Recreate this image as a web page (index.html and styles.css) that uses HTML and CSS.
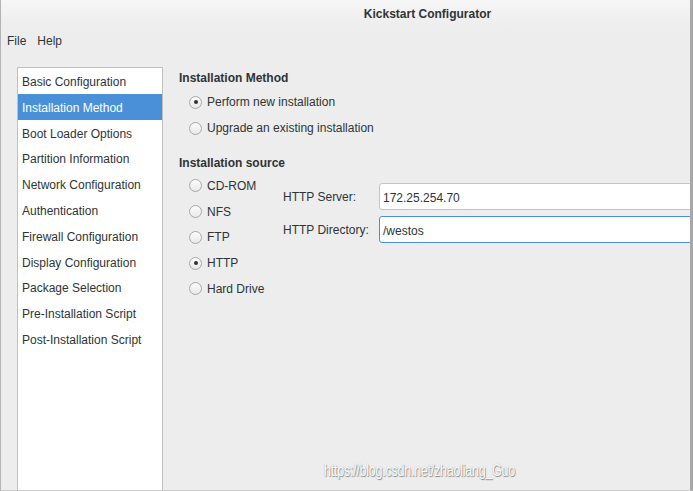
FILE: index.html
```html
<!DOCTYPE html>
<html>
<head>
<meta charset="utf-8">
<link rel="stylesheet" href="styles.css">
</head>
<body>
<div class="window">
  <div class="titlebar"><span class="title">Kickstart Configurator</span></div>
  <div class="menubar"><span class="menu">File</span><span class="menu">Help</span></div>
  <div class="main">
    <ul class="sidebar">
      <li class="item">Basic Configuration</li>
      <li class="item selected">Installation Method</li>
      <li class="item">Boot Loader Options</li>
      <li class="item">Partition Information</li>
      <li class="item">Network Configuration</li>
      <li class="item">Authentication</li>
      <li class="item">Firewall Configuration</li>
      <li class="item">Display Configuration</li>
      <li class="item">Package Selection</li>
      <li class="item">Pre-Installation Script</li>
      <li class="item">Post-Installation Script</li>
    </ul>
    <div class="panel">
      <div class="heading">Installation Method</div>
      <div class="radios method">
        <div class="radio-row"><span class="radio checked"></span><span>Perform new installation</span></div>
        <div class="radio-row"><span class="radio"></span><span>Upgrade an existing installation</span></div>
      </div>
      <div class="heading second">Installation source</div>
      <div class="source">
        <div class="radios">
          <div class="radio-row src"><span class="radio"></span><span>CD-ROM</span></div>
          <div class="radio-row src"><span class="radio"></span><span>NFS</span></div>
          <div class="radio-row src"><span class="radio"></span><span>FTP</span></div>
          <div class="radio-row src"><span class="radio checked"></span><span>HTTP</span></div>
          <div class="radio-row src"><span class="radio"></span><span>Hard Drive</span></div>
        </div>
        <div class="fields">
          <div class="field"><span class="label">HTTP Server:</span><div class="entry">172.25.254.70</div></div>
          <div class="field"><span class="label">HTTP Directory:</span><div class="entry focused">/westos</div></div>
        </div>
      </div>
    </div>
  </div>
  <div class="watermark">https://blog.csdn.net/zhaoliang_Guo</div>
</div>
</body>
</html>
```
FILE: styles.css
```css
html, body {
  margin: 0;
  padding: 0;
  background: #ededed;
  overflow: hidden;
}
.window {
  position: relative;
  width: 693px;
  height: 491px;
  box-sizing: border-box;
  border-left: 1px solid #b3b3b3;
  border-right: 3px solid #a8a8a8;
  border-bottom: 1px solid #cdcdcd;
  background: #ededed;
  font-family: "Liberation Sans", Arial, sans-serif;
  font-size: 12px;
  color: #2e3436;
  overflow: hidden;
  display: flex;
  flex-direction: column;
}
.titlebar {
  height: 27px;
  flex: none;
  display: flex;
  align-items: center;
  justify-content: center;
  padding-left: 164px;
  background: linear-gradient(#f6f6f6, #ededed);
}
.title {
  font-weight: bold;
  font-size: 12px;
  color: #2e3436;
}
.menubar {
  height: 27px;
  flex: none;
  display: flex;
  align-items: center;
  padding-left: 6px;
  gap: 11px;
}
.main {
  flex: 1;
  display: flex;
  align-items: stretch;
  padding: 13px 0 0 16px;
  min-height: 0;
}
.sidebar {
  list-style: none;
  margin: 0;
  padding: 0;
  width: 146px;
  box-sizing: border-box;
  background: #fff;
  border: 1px solid #c0c0c0;
  border-bottom: none;
  flex: none;
}
.item {
  height: 25.8px;
  box-sizing: border-box;
  padding-top: 3px;
  line-height: 22.8px;
  padding-left: 4px;
  white-space: nowrap;
}
.item.selected {
  background: #4a90d9;
  color: #fff;
}
.panel {
  flex: 1;
  padding-left: 16px;
  padding-top: 1px;
  min-width: 0;
}
.heading {
  font-weight: bold;
  height: 20px;
  line-height: 20px;
}
.heading.second {
  margin-top: 12px;
}
.radios {
  display: flex;
  flex-direction: column;
  padding-left: 10px;
}
.radios.method {
  margin-top: 1px;
}
.radio-row {
  height: 26px;
  display: flex;
  align-items: center;
  gap: 5px;
  white-space: nowrap;
}
.radio-row.src {
  height: 25.75px;
}
.radio {
  width: 13px;
  height: 13px;
  box-sizing: border-box;
  border-radius: 50%;
  border: 1px solid #a8a8a8;
  background: linear-gradient(#fcfcfc, #e8e8e8);
  display: flex;
  align-items: center;
  justify-content: center;
  flex: none;
}
.radio.checked::after {
  content: "";
  width: 4px;
  height: 4px;
  border-radius: 50%;
  background: #2e3436;
}
.source {
  display: flex;
  margin-top: 0;
}
.source .radios {
  width: 94px;
  flex: none;
}
.fields {
  flex: 1;
  display: flex;
  flex-direction: column;
  gap: 6px;
  padding-top: 10px;
}
.field {
  display: flex;
  align-items: center;
}
.label {
  width: 96px;
  flex: none;
}
.entry {
  flex: 1;
  height: 27px;
  line-height: 25px;
  box-sizing: border-box;
  border: 1px solid #c4c4c4;
  border-radius: 3px;
  background: #fff;
  padding-left: 3px;
  padding-top: 2px;
  margin-right: -2px;
}
.entry.focused {
  border-color: #4a90d9;
}
.watermark {
  position: absolute;
  left: 323px;
  top: 462px;
  font-family: "Liberation Sans", Arial, sans-serif;
  font-size: 16px;
  letter-spacing: -0.3px;
  transform: scaleX(0.78);
  transform-origin: left top;
  white-space: nowrap;
  color: #ffffff;
  text-shadow: 1px 1px 1px #8a8a8a, 0 0 1px #a0a0a0;
}
```
